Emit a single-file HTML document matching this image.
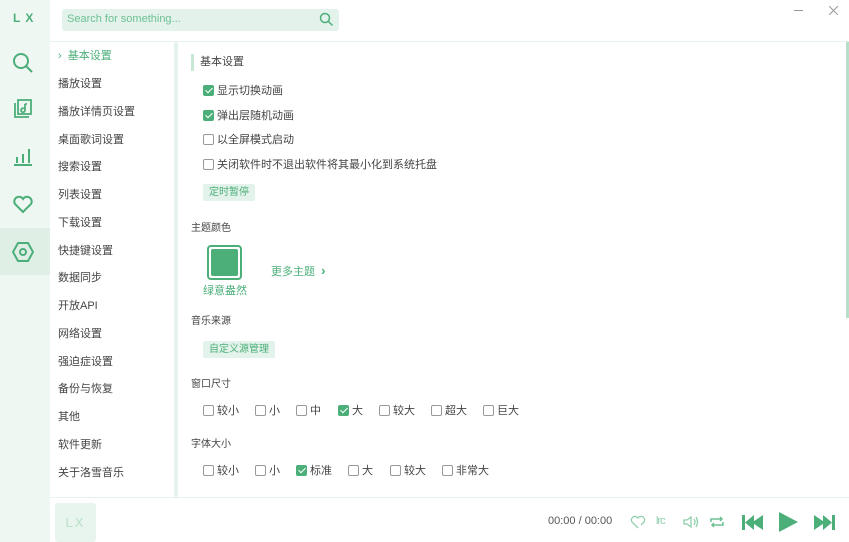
<!DOCTYPE html>
<html><head><meta charset="utf-8"><style>
*{margin:0;padding:0;box-sizing:border-box}
body{width:849px;height:542px;overflow:hidden;background:#fff;font-family:"Liberation Sans","Noto Sans CJK SC",sans-serif;font-size:11px;color:#444;position:relative}
.a{position:absolute}
#side{left:0;top:0;width:50px;height:542px;background:#eff7f3}
.mi{position:absolute;left:58px;font-size:11px;color:#444;line-height:14px}
.t{position:absolute;font-size:11px;color:#444;line-height:14px}
.cb{position:absolute;width:11px;height:11px;border:1px solid #999;border-radius:2px;background:#fff}
.cb.on{background:#4caf7a;border-color:#4caf7a}
.cb.on:after{content:"";position:absolute;left:3px;top:0px;width:3px;height:6px;border:solid #fff;border-width:0 1.6px 1.6px 0;transform:rotate(45deg)}
.btn{position:absolute;background:#e3f2ea;color:#4caf7a;font-size:10px;line-height:17px;padding:0 6px;border-radius:2px}
svg{position:absolute}
</style></head><body>
<div id="side" class="a"></div>
<div class="a" style="left:13px;top:11px;color:#4caf7a;font-weight:bold;font-size:12px;letter-spacing:5px">LX</div>
<svg style="left:12px;top:52px" width="22" height="22" viewBox="0 0 22 22" fill="none" stroke="#4caf7a" stroke-width="2"><circle cx="9" cy="9" r="7"/><path d="M14 14l6 6"/></svg>
<svg style="left:13px;top:99px" width="20" height="20" viewBox="0 0 20 20" fill="none" stroke="#4caf7a" stroke-width="1.8"><path d="M2 4v14h14"/><rect x="5" y="1" width="13" height="14"/><path d="M12 5v6a2 2 0 1 1-1-1.5M12 5h2"/></svg>
<svg style="left:13px;top:146px" width="20" height="20" viewBox="0 0 20 20" fill="none" stroke="#4caf7a" stroke-width="2"><path d="M1 19h18M4 11v6M10 8v9M16 3v14"/></svg>
<svg style="left:12px;top:194px" width="22" height="20" viewBox="0 0 22 20" fill="none" stroke="#4caf7a" stroke-width="2"><path d="M11 18L3 10a4.5 4.5 0 0 1 8-5 4.5 4.5 0 0 1 8 5z"/></svg>
<div class="a" style="left:0;top:228px;width:50px;height:47px;background:#dfefe6"></div>
<svg style="left:12px;top:241px" width="22" height="22" viewBox="0 0 22 22" fill="none" stroke="#4caf7a" stroke-width="2"><path d="M6 2h10l5 9-5 9H6l-5-9z"/><circle cx="11" cy="11" r="3"/></svg>

<div class="a" style="left:50px;top:41px;width:799px;height:1px;background:#e6f2ec"></div>
<div class="a" style="left:62px;top:9px;width:277px;height:22px;background:#e3f2ea;border-radius:3px"></div>
<div class="a" style="left:67px;top:13px;color:#6cc094;font-size:11px">Search for something...</div>
<svg style="left:319px;top:12px" width="15" height="15" viewBox="0 0 15 15" fill="none" stroke="#4caf7a" stroke-width="1.5"><circle cx="6" cy="6" r="4.5"/><path d="M9.5 9.5l4 4"/></svg>
<div class="a" style="left:794px;top:10px;width:9px;height:1px;background:#999"></div>
<svg style="left:829px;top:6px" width="9" height="9" viewBox="0 0 9 9" stroke="#999" stroke-width="1"><path d="M0 0l9 9M9 0L0 9"/></svg>

<div class="mi" style="top:49px;color:#4caf7a">›&nbsp;&nbsp;基本设置</div>
<div class="mi" style="top:77px">播放设置</div>
<div class="mi" style="top:105px">播放详情页设置</div>
<div class="mi" style="top:133px">桌面歌词设置</div>
<div class="mi" style="top:160px">搜索设置</div>
<div class="mi" style="top:188px">列表设置</div>
<div class="mi" style="top:216px">下载设置</div>
<div class="mi" style="top:244px">快捷键设置</div>
<div class="mi" style="top:271px">数据同步</div>
<div class="mi" style="top:299px">开放API</div>
<div class="mi" style="top:327px">网络设置</div>
<div class="mi" style="top:355px">强迫症设置</div>
<div class="mi" style="top:382px">备份与恢复</div>
<div class="mi" style="top:410px">其他</div>
<div class="mi" style="top:438px">软件更新</div>
<div class="mi" style="top:466px">关于洛雪音乐</div>
<div class="a" style="left:174px;top:42px;width:4px;height:455px;background:#e6f3ec;border-radius:2px"></div>
<div class="a" style="left:846px;top:42px;width:3px;height:276px;background:#b8dfc8"></div>

<div class="a" style="left:191px;top:54px;width:3px;height:17px;background:#c8e8d5"></div>
<div class="t" style="left:200px;top:55px">基本设置</div>
<div class="cb on" style="left:203px;top:85px"></div><div class="t" style="left:217px;top:84px">显示切换动画</div>
<div class="cb on" style="left:203px;top:110px"></div><div class="t" style="left:217px;top:109px">弹出层随机动画</div>
<div class="cb" style="left:203px;top:134px"></div><div class="t" style="left:217px;top:133px">以全屏模式启动</div>
<div class="cb" style="left:203px;top:159px"></div><div class="t" style="left:217px;top:158px">关闭软件时不退出软件将其最小化到系统托盘</div>
<div class="btn" style="left:203px;top:184px">定时暂停</div>

<div class="t" style="left:191px;top:222px;font-size:10px">主题颜色</div>
<div class="a" style="left:207px;top:245px;width:35px;height:35px;border:2px solid #4caf7a;border-radius:4px;padding:2px"><div style="width:100%;height:100%;background:#4caf7a;border-radius:2px"></div></div>
<div class="t" style="left:203px;top:284px;color:#4caf7a">绿意盎然</div>
<div class="t" style="left:271px;top:264px;color:#4caf7a">更多主题&nbsp;&nbsp;<b style="font-size:13px">›</b></div>

<div class="t" style="left:191px;top:315px;font-size:10px">音乐来源</div>
<div class="btn" style="left:203px;top:341px">自定义源管理</div>

<div class="t" style="left:191px;top:378px;font-size:10px">窗口尺寸</div>
<div class="cb" style="left:203px;top:405px"></div><div class="t" style="left:217px;top:404px">较小</div>
<div class="cb" style="left:255px;top:405px"></div><div class="t" style="left:269px;top:404px">小</div>
<div class="cb" style="left:296px;top:405px"></div><div class="t" style="left:310px;top:404px">中</div>
<div class="cb on" style="left:338px;top:405px"></div><div class="t" style="left:352px;top:404px">大</div>
<div class="cb" style="left:379px;top:405px"></div><div class="t" style="left:393px;top:404px">较大</div>
<div class="cb" style="left:431px;top:405px"></div><div class="t" style="left:445px;top:404px">超大</div>
<div class="cb" style="left:483px;top:405px"></div><div class="t" style="left:497px;top:404px">巨大</div>

<div class="t" style="left:191px;top:438px;font-size:10px">字体大小</div>
<div class="cb" style="left:203px;top:465px"></div><div class="t" style="left:217px;top:464px">较小</div>
<div class="cb" style="left:255px;top:465px"></div><div class="t" style="left:269px;top:464px">小</div>
<div class="cb on" style="left:296px;top:465px"></div><div class="t" style="left:310px;top:464px">标准</div>
<div class="cb" style="left:348px;top:465px"></div><div class="t" style="left:362px;top:464px">大</div>
<div class="cb" style="left:390px;top:465px"></div><div class="t" style="left:404px;top:464px">较大</div>
<div class="cb" style="left:442px;top:465px"></div><div class="t" style="left:456px;top:464px">非常大</div>

<div class="a" style="left:50px;top:497px;width:799px;height:1px;background:#e6f2ec"></div>
<div class="a" style="left:55px;top:503px;width:41px;height:39px;background:#e8f4ee;border-radius:3px;color:#b8e0c9;font-size:13px;text-align:center;line-height:39px;letter-spacing:2px">LX</div>
<div class="a" style="left:548px;top:515px;color:#555;font-size:11px">00:00 / 00:00</div>
<svg style="left:630px;top:514px" width="16" height="16" viewBox="0 0 16 16" fill="none" stroke="#8fcfa9" stroke-width="1.3"><path d="M8 14L2 8a3.5 3.5 0 0 1 6-4 3.5 3.5 0 0 1 6 4l-3 3"/></svg>
<div class="a" style="left:656px;top:515px;color:#8fcfa9;font-size:11px;letter-spacing:-1px">lrc</div>
<svg style="left:682px;top:514px" width="18" height="16" viewBox="0 0 18 16" fill="none" stroke="#8fcfa9" stroke-width="1.3"><path d="M2 6h3l4-3v10l-4-3H2z"/><path d="M12 5q2 3 0 6M14 3q3 5 0 10"/></svg>
<svg style="left:709px;top:514px" width="16" height="16" viewBox="0 0 16 16" fill="none" stroke="#6cc094" stroke-width="1.5"><path d="M2 8V5h11M11 3l2 2-2 2M14 8v3H3M5 13l-2-2 2-2"/></svg>
<svg style="left:742px;top:514px" width="22" height="17" viewBox="0 0 22 17"><rect x="0" y="1" width="3" height="15" fill="#4caf7a"/><path d="M3 8.5L12 1v15zM10 8.5L21 1v15z" fill="#4caf7a"/></svg>
<svg style="left:778px;top:511px" width="21" height="22" viewBox="0 0 21 22"><path d="M1 1l19 10L1 21z" fill="#4caf7a"/></svg>
<svg style="left:813px;top:514px" width="22" height="17" viewBox="0 0 22 17"><rect x="19" y="1" width="3" height="15" fill="#4caf7a"/><path d="M19 8.5L10 1v15zM12 8.5L1 1v15z" fill="#4caf7a"/></svg>
</body></html>
